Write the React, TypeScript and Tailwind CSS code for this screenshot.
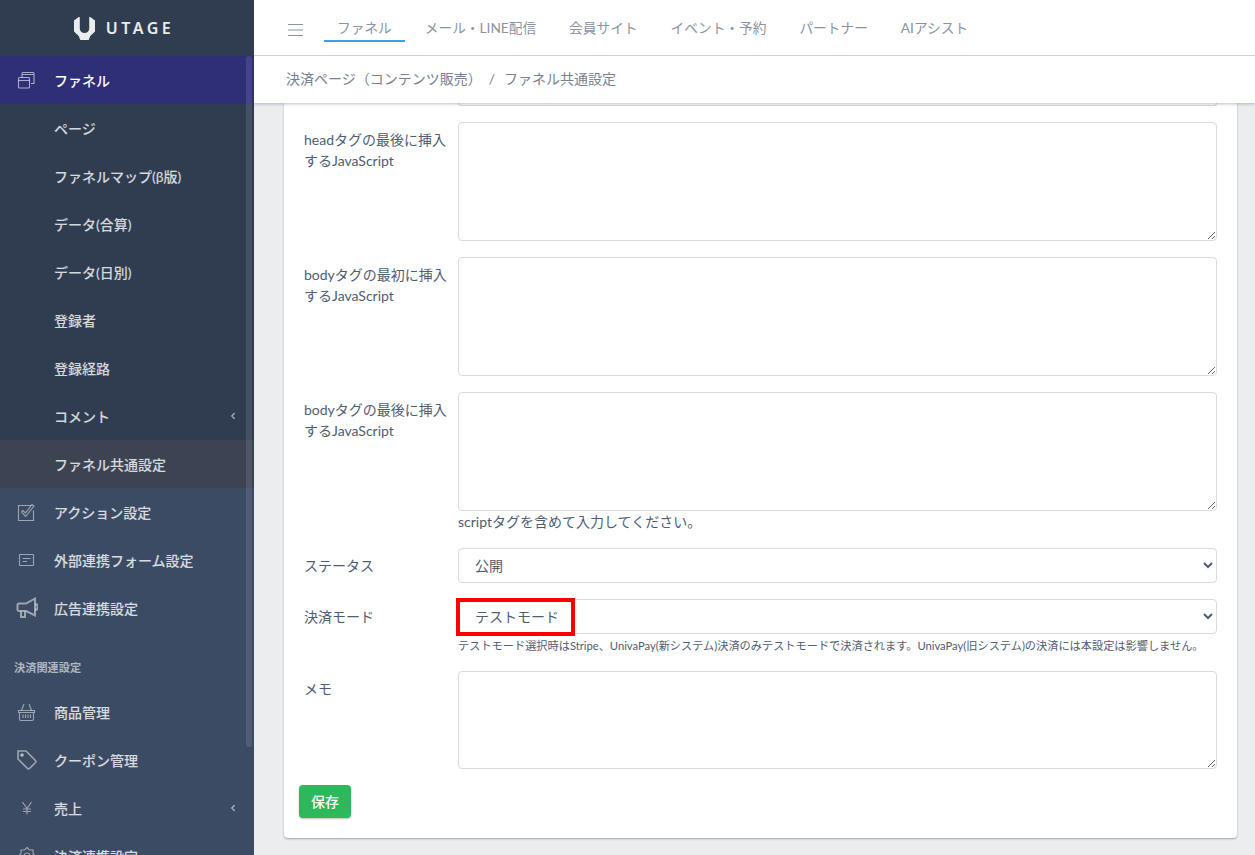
import { ChevronLeft } from "lucide-react";
import type { ReactNode } from "react";

const tabs = ["ファネル", "メール・LINE配信", "会員サイト", "イベント・予約", "パートナー", "AIアシスト"];

const subItems = ["ページ", "ファネルマップ(β版)", "データ(合算)", "データ(日別)", "登録者", "登録経路"];

const Svg = ({ children }: { children: ReactNode }) => (
  <svg width="22" height="22" viewBox="0 0 22 22" fill="none" stroke="currentColor" strokeWidth="1.1">
    {children}
  </svg>
);

const icons: Record<string, ReactNode> = {
  funnel: (
    <Svg>
      <rect x="2.500" y="8.500" width="11" height="10.500" rx="1" />
      <path d="M2.500 11.500h11" />
      <path d="M6 8.500V4.500a1 1 0 0 1 1-1h10a1 1 0 0 1 1 1v10h-3M6 5.500h12" />
    </Svg>
  ),
  action: (
    <Svg>
      <path d="M17.500 9.500V19.500H2.500V4.500H15" />
      <path d="M5.500 11l1.500-1.500 2.500 2.500 6.500-8.500 2 1.500-8.300 10.500z" />
    </Svg>
  ),
  form: (
    <Svg>
      <rect x="3.500" y="5.500" width="14" height="11" rx="0.500" />
      <path d="M6.500 9.500h8M6.500 12.500h4.500" />
    </Svg>
  ),
  ads: (
    <Svg>
      <path d="M19 1.500L10 6.500H3a1.500 1.500 0 0 0-1.500 1.500v4.500a1.500 1.500 0 0 0 1.500 1.500h7l9 4.500z" strokeWidth="2" />
      <path d="M19 7.500h2.500v5H19M5 14.500V20h4v-5.500" strokeWidth="2" />
    </Svg>
  ),
  basket: (
    <Svg>
      <path d="M2.500 9.500h16v2h-16zM3.500 11.500v6.500a1.500 1.500 0 0 0 1.500 1.500h11a1.500 1.500 0 0 0 1.500-1.500v-6.500" />
      <path d="M5.500 9.500L8 3M15.500 9.500L13 3M7 13.500v3.500M9.500 13.500v3.500M12 13.500v3.500M14.500 13.500v3.500" />
    </Svg>
  ),
  coupon: (
    <Svg>
      <path d="M2 2h8L19.500 11.500a1.500 1.500 0 0 1 0 2l-6 6a1.500 1.500 0 0 1-2 0L2 10z" strokeWidth="1.600" />
      <circle cx="6" cy="6" r="1.300" fill="currentColor" />
    </Svg>
  ),
  yen: (
    <Svg>
      <path d="M6.500 5l4.500 6.500L15.500 5M11 11.500v6M7 12h8M7 14.500h8" />
    </Svg>
  ),
  settings: (
    <Svg>
      <path d="M11 2.500l2.500 2.500h3.500v3.500l2.500 2.500-2.500 2.500V17h-3.500L11 19.500 8.500 17H5v-3.500L2.500 11 5 8.500V5h3.500z" />
      <circle cx="11" cy="11" r="3" />
    </Svg>
  ),
};

function NavItem({ label, icon, chevron }: { label: string; icon?: string; chevron?: boolean }) {
  return (
    <div className="h-12 shrink-0 flex items-center text-sm font-medium text-white/80">
      <span className="w-[54px] pl-[16px] shrink-0 text-white/50 flex">{icon && icons[icon]}</span>
      <span className="relative top-[1px]">{label}</span>
      {chevron && <ChevronLeft className="ml-auto mr-[16px] text-white/60" size={10} strokeWidth={3} />}
    </div>
  );
}

function ScriptRow({ label }: { label: ReactNode }) {
  return (
    <div className="flex px-5">
      <label className="w-[154px] shrink-0 pr-2 pt-[7px] text-sm leading-[21px] text-[#4f5d73]">{label}</label>
      <textarea className="flex-1 h-[119px] border border-[#d8dbe0] rounded bg-white block" />
    </div>
  );
}

function SelectRow({ label, value }: { label: string; value: string }) {
  return (
    <div className="flex px-5">
      <label className="w-[154px] shrink-0 pt-[7px] text-sm leading-[21px] text-[#4f5d73]">{label}</label>
      <select
        defaultValue={value}
        className="flex-1 h-[35px] border border-[#d8dbe0] rounded bg-white pl-3 text-sm text-[#4f5d73] appearance-auto"
      >
        <option>{value}</option>
      </select>
    </div>
  );
}

export default function App() {
  return (
    <div className="h-[855px] flex overflow-hidden bg-[#ebedef] font-['Lato','Noto_Sans_CJK_JP',sans-serif]">
      {/* sidebar */}
      <aside className="w-[254px] shrink-0 h-full flex flex-col bg-[#3c4b64] relative overflow-hidden">
        <div className="h-14 shrink-0 bg-[#303c50] flex items-center justify-center gap-[11px] pr-[9px] text-white/90">
          <svg width="21" height="23" viewBox="0 0 20 23" fill="currentColor" preserveAspectRatio="none">
            <path d="M0 3.500L4.500 0h1v11.500a4.500 4.500 0 0 0 9 0V0h1L20 3.500V14.500L15.500 19l-1.500 4H6l-1.500-4L0 14.500z" />
          </svg>
          <span className="text-[16px] font-semibold tracking-[0.22em] mr-[-3px] font-['Noto_Sans',sans-serif]">UTAGE</span>
        </div>
        <div className="h-12 shrink-0 bg-[#2f2f78] flex items-center text-sm font-medium text-white">
          <span className="w-[54px] pl-[16px] shrink-0 text-white/60 flex">{icons.funnel}</span>
          <span className="relative top-[1px]">ファネル</span>
        </div>
        <div className="bg-[#303c50] flex flex-col shrink-0">
          {subItems.map((s) => (
            <NavItem key={s} label={s} />
          ))}
          <NavItem label="コメント" chevron />
          <div className="bg-[#3c4453]">
            <NavItem label="ファネル共通設定" />
          </div>
        </div>
        <NavItem label="アクション設定" icon="action" />
        <NavItem label="外部連携フォーム設定" icon="form" />
        <NavItem label="広告連携設定" icon="ads" />
        <div className="pl-[14px] pt-[28px] pb-[12px] text-[11.200px] leading-[16px] font-bold text-white/60 shrink-0">決済関連設定</div>
        <NavItem label="商品管理" icon="basket" />
        <NavItem label="クーポン管理" icon="coupon" />
        <NavItem label="売上" icon="yen" chevron />
        <NavItem label="決済連携設定" icon="settings" />
        {/* scrollbar thumb */}
        <div className="absolute left-[246px] top-[56px] w-[6px] h-[691px] rounded bg-white/10" />
      </aside>

      <main className="flex-1 min-w-0 h-full flex flex-col">
        <header className="h-14 shrink-0 bg-white border-b border-[#d8dbe0] flex items-center pl-[34px]">
          <svg width="15" height="14" viewBox="0 0 15 14" className="text-[#8a93a2] mr-[21px] mt-[4px]" stroke="currentColor" strokeWidth="1.200">
            <path d="M0 1.500h15M0 7h15M0 12.500h15" />
          </svg>
          <nav className="flex gap-[7px] text-[13.700px] text-[#8a93a2]">
            {tabs.map((t, i) => (
              <a
                key={t}
                className={
                  i === 0
                    ? "px-[13px] h-[32px] leading-[34px] pt-[1px] border-b-2 border-[#39a0ed] mt-[-3px]"
                    : "px-[13px] h-[32px] leading-[34px] pt-[1px] mt-[-3px]"
                }
              >
                {t}
              </a>
            ))}
          </nav>
        </header>
        <div className="h-[47px] shrink-0 bg-white shadow-[0_1px_3px_rgba(60,75,100,0.35)] flex items-center pl-8 pb-[1px] text-sm text-[#768192] relative z-10">
          <span>決済ページ（コンテンツ販売）</span>
          <span className="ml-[7px] mr-[9px]">/</span>
          <span>ファネル共通設定</span>
        </div>

        <div className="flex-1 min-h-0 px-[30px] pr-[18px] overflow-hidden">
          <div className="bg-white rounded-b shadow-[0_1px_2px_rgba(60,75,100,0.45)] pb-5">
            <div className="ml-[174px] mr-5 h-[3px] border-b border-x border-[#d8dbe0] rounded-b" />
            <div className="flex flex-col gap-4 mt-4">
              <ScriptRow label={<>headタグの最後に挿入するJavaScript</>} />
              <ScriptRow label={<>bodyタグの最初に挿入するJavaScript</>} />
              <div>
                <ScriptRow label={<>bodyタグの最後に挿入するJavaScript</>} />
                <p className="ml-[174px] mt-[1px] text-sm leading-[20px] text-[#4f5d73]">scriptタグを含めて入力してください。</p>
              </div>
            </div>
            <div className="mt-4">
              <SelectRow label="ステータス" value="公開" />
            </div>
            <div className="mt-4 relative">
              <SelectRow label="決済モード" value="テストモード" />
              <div className="absolute left-[172px] top-[-1px] w-[119px] h-[38px] border-4 border-[#ff0000]" />
            </div>
            <p className="ml-[174px] mt-[3px] text-[11.200px] leading-[18px] text-[#4f5d73] whitespace-nowrap">
              テストモード選択時はStripe、UnivaPay(新システム)決済のみテストモードで決済されます。UnivaPay(旧システム)の決済には本設定は影響しません。
            </p>
            <div className="flex px-5 mt-4">
              <label className="w-[154px] shrink-0 pt-[7px] text-sm leading-[21px] text-[#4f5d73]">メモ</label>
              <textarea className="flex-1 h-[98px] border border-[#d8dbe0] rounded bg-white block" />
            </div>
            <button className="ml-[15px] mt-4 w-[52px] h-[33px] rounded bg-[#2eb85c] text-white text-sm font-medium shadow-[0_1px_2px_rgba(0,0,0,0.25)]">
              保存
            </button>
          </div>
        </div>
      </main>
    </div>
  );
}
